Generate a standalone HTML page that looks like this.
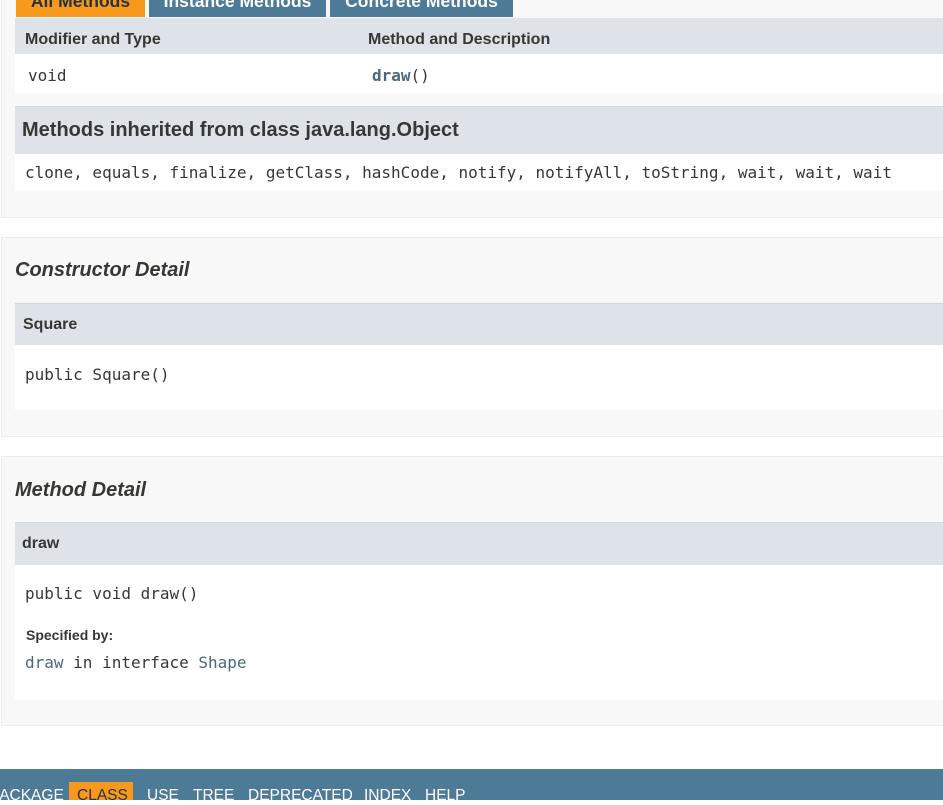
<!DOCTYPE html>
<html><head><style>
body{margin:0;width:943px;height:800px;overflow:hidden;background:#fff;font-family:"Liberation Sans",Arial,sans-serif;color:#353833;position:relative}
.a{position:absolute}
.blk{position:absolute;left:1px;width:950px;background:#f8f8f8;border:1px solid #ededed}
.hd{position:absolute;left:15px;width:940px;background:#dee3e9}
.wh{position:absolute;left:15px;width:940px;background:#fff}
.mono{font-family:"DejaVu Sans Mono",monospace;font-size:16px}
.tab{position:absolute;top:-10px;height:27px;color:#fff;font-weight:bold;font-size:17.5px;line-height:22px;text-align:center}
a{color:#4a6782;text-decoration:none}
.f{position:absolute;top:787px;font-size:15.5px;color:#fff;white-space:nowrap}
</style></head><body>
<div class="blk" style="top:-10px;height:226px"></div>
<div class="tab" style="left:16px;width:129px;background:#f8981d;color:#253441">All Methods</div>
<div class="tab" style="left:149px;width:177px;background:#4d7a97">Instance Methods</div>
<div class="tab" style="left:330px;width:183px;background:#4d7a97">Concrete Methods</div>
<div class="hd" style="top:18px;height:36px"></div>
<div class="a" style="left:25px;top:31px;font-size:16px;font-weight:bold">Modifier and Type</div>
<div class="a" style="left:368px;top:31px;font-size:16px;font-weight:bold">Method and Description</div>
<div class="wh" style="top:54px;height:39px"></div>
<div class="a mono" style="left:28px;top:66px">void</div>
<div class="a mono" style="left:372px;top:66px"><a style="font-weight:bold">draw</a>()</div>
<div class="hd" style="top:106px;height:47px;border-top:1px solid #d0d9e0"></div>
<div class="a" style="left:22px;top:119px;font-size:20px;font-weight:bold">Methods inherited from class java.lang.Object</div>
<div class="wh" style="top:154px;height:37px"></div>
<div class="a mono" style="left:25px;top:163px">clone, equals, finalize, getClass, hashCode, notify, notifyAll, toString, wait, wait, wait</div>

<div class="blk" style="top:237px;height:198px"></div>
<div class="a" style="left:15px;top:259px;font-size:20px;font-weight:bold;font-style:italic">Constructor Detail</div>
<div class="hd" style="top:303px;height:41px;border-top:1px solid #d0d9e0"></div>
<div class="a" style="left:23px;top:316px;font-size:16px;font-weight:bold">Square</div>
<div class="wh" style="top:345px;height:65px"></div>
<div class="a mono" style="left:25px;top:365px">public Square()</div>

<div class="blk" style="top:456px;height:268px"></div>
<div class="a" style="left:15px;top:479px;font-size:20px;font-weight:bold;font-style:italic">Method Detail</div>
<div class="hd" style="top:522px;height:42px;border-top:1px solid #d0d9e0"></div>
<div class="a" style="left:22px;top:535px;font-size:16px;font-weight:bold">draw</div>
<div class="wh" style="top:565px;height:135px"></div>
<div class="a mono" style="left:25px;top:584px">public void draw()</div>
<div class="a" style="left:26px;top:627px;font-size:14px;font-weight:bold">Specified by:</div>
<div class="a mono" style="left:25px;top:653px"><a>draw</a> in interface <a>Shape</a></div>

<div class="a" style="left:0;top:769px;width:943px;height:31px;background:#4d7a97"></div>
<div class="a" style="left:69px;top:782px;width:64px;height:18px;background:#f8981d"></div>
<div class="f" style="left:-10px">PACKAGE</div>
<div class="f" style="left:77px;color:#253441">CLASS</div>
<div class="f" style="left:147px">USE</div>
<div class="f" style="left:193px">TREE</div>
<div class="f" style="left:248px">DEPRECATED</div>
<div class="f" style="left:364px">INDEX</div>
<div class="f" style="left:425px">HELP</div>
</body></html>
